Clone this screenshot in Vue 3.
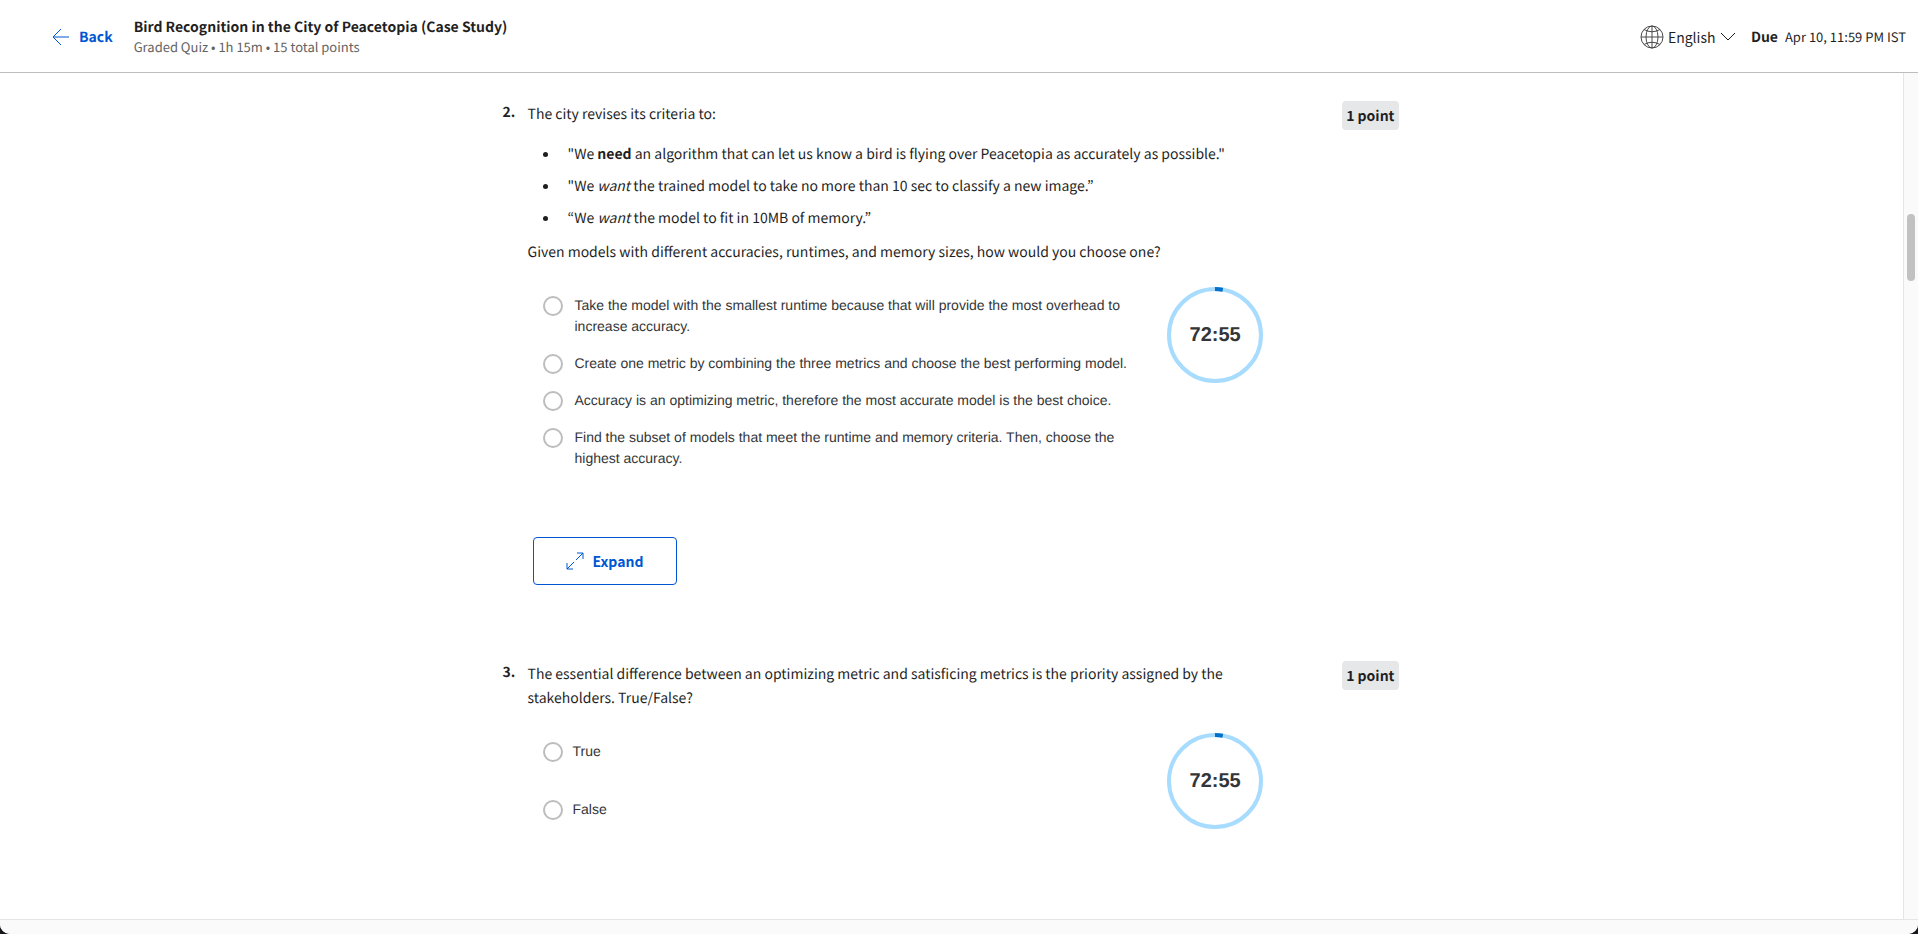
<script setup>
import { ref } from 'vue'

const language = ref('English')
const answers = ref({})

const questions = [
  {
    number: 2,
    intro: 'The city revises its criteria to:',
    criteria: [
      { before: '"We ', word: 'need', tag: 'strong', after: ' an algorithm that can let us know a bird is flying over Peacetopia as accurately as possible."' },
      { before: '"We ', word: 'want', tag: 'em', after: ' the trained model to take no more than 10 sec to classify a new image.”' },
      { before: '“We ', word: 'want', tag: 'em', after: ' the model to fit in 10MB of memory.”' },
    ],
    prompt: 'Given models with different accuracies, runtimes, and memory sizes, how would you choose one?',
    options: [
      'Take the model with the smallest runtime because that will provide the most overhead to increase accuracy.',
      'Create one metric by combining the three metrics and choose the best performing model.',
      'Accuracy is an optimizing metric, therefore the most accurate model is the best choice.',
      'Find the subset of models that meet the runtime and memory criteria. Then, choose the highest accuracy.',
    ],
    spacious: false,
    expandable: true,
  },
  {
    number: 3,
    intro: 'The essential difference between an optimizing metric and satisficing metrics is the priority assigned by the stakeholders. True/False?',
    criteria: [],
    prompt: '',
    options: ['True', 'False'],
    spacious: true,
    expandable: false,
  },
]
</script>

<template>
  <div class="page">
    <header class="topbar">
      <a class="back" href="#">
        <svg width="18" height="18" viewBox="0 0 18 18" fill="none" stroke="currentColor" aria-hidden="true">
          <path d="M17 9H1M9 1L1 9l8 8" />
        </svg>
        <span>Back</span>
      </a>
      <div class="heading">
        <h1>Bird Recognition in the City of Peacetopia (Case Study)</h1>
        <p>Graded Quiz • 1h 15m • 15 total points</p>
      </div>
      <div class="meta">
        <label class="language">
          <svg width="24" height="24" viewBox="0 0 24 24" fill="none" stroke="#4a4a4a" aria-hidden="true">
            <circle cx="12" cy="12" r="11" />
            <ellipse cx="12" cy="12" rx="6" ry="11" />
            <path d="M1 12h22M12 1v22M4 4.500Q12 9 20 4.500M4 19.500Q12 15 20 19.500" />
          </svg>
          <select v-model="language" aria-label="Language">
            <option>English</option>
          </select>
          <svg width="16" height="10" viewBox="0 0 16 10" fill="none" stroke="#1f1f1f" aria-hidden="true">
            <path d="M1 1l7 7 7-7" />
          </svg>
        </label>
        <div class="due"><b>Due</b><time>Apr 10, 11:59 PM IST</time></div>
      </div>
    </header>

    <div class="viewport">
      <main class="quiz">
        <section v-for="q in questions" :key="q.number" class="question">
          <div class="number">{{ q.number }}.</div>
          <div class="body">
            <p class="text">{{ q.intro }}</p>
            <ul v-if="q.criteria.length" class="criteria">
              <li v-for="(c, i) in q.criteria" :key="i">{{ c.before }}<component :is="c.tag">{{ c.word }}</component>{{ c.after }}</li>
            </ul>
            <p v-if="q.prompt" class="text">{{ q.prompt }}</p>
            <div class="answer">
              <div class="options" :class="{ spacious: q.spacious }" role="radiogroup" :aria-label="'Question ' + q.number">
                <label v-for="(option, i) in q.options" :key="i" class="option">
                  <input v-model="answers[q.number]" type="radio" :name="'question-' + q.number" :value="i" />
                  <span>{{ option }}</span>
                </label>
              </div>
              <div class="timer" role="timer">
                <svg viewBox="0 0 96 96" fill="none" stroke-width="4" aria-hidden="true">
                  <circle cx="48" cy="48" r="46" stroke="#a8dcff" />
                  <path d="M48 2A46 46 0 0 1 55.800 2.700" stroke="#0070c9" />
                </svg>
                <span>72:55</span>
              </div>
            </div>
            <button v-if="q.expandable" class="expand" type="button">
              <svg width="18" height="18" viewBox="0 0 18 18" fill="none" stroke="currentColor" aria-hidden="true">
                <path d="M10 8L17 1M11 1h6v6M8 10L1 17M1 11v6h6" />
              </svg>
              <span>Expand</span>
            </button>
          </div>
          <div class="points">1 point</div>
        </section>
      </main>
      <div class="track" aria-hidden="true"><div class="thumb"></div></div>
    </div>
    <footer class="edge" aria-hidden="true"></footer>
  </div>
</template>

<style>
body {
  background: #17161c;
}
</style>

<style scoped>
.page {
  display: flex;
  flex-direction: column;
  height: 100vh;
  overflow: hidden;
  background: #fff;
  border-radius: 0 0 10px 10px;
  color: #1f1f1f;
  font-family: "Noto Sans CJK KR", "Open Sans", sans-serif;
  font-size: 14px;
  line-height: 24px;
  text-rendering: geometricPrecision;
}

h1,
p,
ul {
  margin: 0;
  padding: 0;
}

.topbar {
  display: flex;
  align-items: center;
  flex: none;
  box-sizing: border-box;
  height: 73px;
  padding: 1px 12px 0 52px;
  border-bottom: 1px solid #bdbdbd;
}

.back {
  display: flex;
  align-items: center;
  gap: 9px;
  margin-right: 21px;
  color: #0056d2;
  font-weight: 700;
  text-decoration: none;
}

.heading h1 {
  font-size: 14px;
  font-weight: 700;
  line-height: 20px;
}

.heading p {
  color: #636363;
  font-size: 13px;
  line-height: 20px;
}

.meta {
  display: flex;
  align-items: center;
  gap: 15px;
  margin-left: auto;
}

.language {
  display: flex;
  align-items: center;
  gap: 4px;
}

.language select {
  appearance: none;
  padding: 0;
  border: 0;
  background: none;
  color: inherit;
  font: inherit;
}

.due {
  display: flex;
  align-items: center;
  gap: 7px;
}

.due time {
  font-size: 13px;
}

.viewport {
  display: flex;
  flex: 1;
  min-height: 0;
}

.quiz {
  flex: 1;
  overflow: hidden;
  padding: 28px 25px 0 23px;
}

.question {
  display: grid;
  grid-template-columns: 25px 1fr auto;
  align-items: start;
  max-width: 896px;
  margin: 0 auto 76px;
}

.number {
  padding-top: 1px;
  font-weight: 700;
  line-height: 20px;
}

.body {
  margin-right: 72px;
  padding-top: 1px;
}

.criteria {
  margin: 12px 0 6px;
  padding-left: 40px;
  line-height: 32px;
  list-style: none;
}

.criteria li::before {
  content: "";
  float: left;
  width: 5px;
  height: 5px;
  margin: 14px 0 0 -25px;
  border-radius: 50%;
  background: #1f1f1f;
}

.answer {
  display: flex;
  align-items: flex-start;
  gap: 24px;
  margin-top: 23px;
  padding: 0 7px 0 15px;
}

.options {
  display: flex;
  flex: 1;
  flex-direction: column;
  gap: 16px;
  padding-top: 8px;
  color: #333638;
  font-family: "Liberation Sans", Arial, sans-serif;
  font-size: 14px;
  line-height: 21px;
}

.options.spacious {
  gap: 37px;
}

.option {
  display: flex;
  align-items: flex-start;
  gap: 12px;
}

.spacious .option {
  gap: 10px;
}

.option input {
  appearance: none;
  flex: none;
  box-sizing: border-box;
  width: 20px;
  height: 20px;
  margin: 1px 0 0;
  border: 2px solid #bdbdbd;
  border-radius: 50%;
}

.option input:checked {
  border: 6px solid #0056d2;
}

.timer {
  display: grid;
  flex: none;
  place-items: center;
  width: 96px;
  height: 96px;
  color: #333638;
  font-family: "Liberation Sans", Arial, sans-serif;
  font-size: 20px;
  font-weight: 700;
}

.timer > * {
  grid-area: 1 / 1;
}

.expand {
  display: flex;
  align-items: center;
  justify-content: center;
  gap: 9px;
  width: 144px;
  height: 48px;
  margin: 68px 0 0 5px;
  border: 1px solid #0056d2;
  border-radius: 4px;
  background: #fff;
  color: #0056d2;
  font: inherit;
  font-weight: 700;
}

.points {
  padding: 3px 4px 2px;
  border-radius: 4px;
  background: #e5e7e8;
  font-weight: 700;
}

.track {
  flex: none;
  box-sizing: border-box;
  width: 15px;
  padding: 141px 3px 0;
  border-left: 1px solid #e5e5e5;
  background: #fafafa;
}

.thumb {
  width: 8px;
  height: 67px;
  border-radius: 4px;
  background: #c1c1c1;
}

.edge {
  flex: none;
  box-sizing: border-box;
  height: 15px;
  border-top: 1px solid #e5e5e5;
  background: #fafafa;
}
</style>
